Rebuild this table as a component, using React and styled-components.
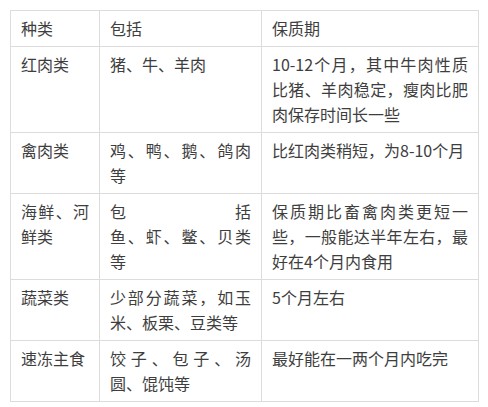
import React from "react";
import styled, { createGlobalStyle } from "styled-components";

const Global = createGlobalStyle`
  html, body { margin: 0; padding: 0; background: #fff; }
  body { font-family: "Noto Sans CJK SC", "Noto Sans", sans-serif; }
`;

const Page = styled.div`
  padding: 10px;
`;

const Table = styled.table`
  border-collapse: collapse;
  table-layout: fixed;
  width: 469px;
  font-size: 16px;
  line-height: 25px;
  color: #3e3e3e;
`;

const Col = styled.col`
  width: ${(p) => p.$w}px;
`;

const Cell = styled.td`
  border: 1px solid #dcdcdc;
  padding: 5px 10px;
  vertical-align: top;
  text-align: justify;
  word-break: normal;
  line-break: strict;
`;

const SpreadLine = styled.span`
  display: block;
  text-align: justify;
  text-align-last: justify;
`;

const widths = [89, 162, 217];

const rows = [
  ["种类", "包括", "保质期"],
  ["红肉类", "猪、牛、羊肉", "10-12个月，其中牛肉性质比猪、羊肉稳定，瘦肉比肥肉保存时间长一些"],
  ["禽肉类", "鸡、鸭、鹅、鸽肉等", "比红肉类稍短，为8-10个月"],
  [
    "海鲜、河鲜类",
    <>
      <SpreadLine>包括</SpreadLine>
      鱼、虾、鳖、贝类等
    </>,
    "保质期比畜禽肉类更短一些，一般能达半年左右，最好在4个月内食用",
  ],
  ["蔬菜类", "少部分蔬菜，如玉米、板栗、豆类等", "5个月左右"],
  ["速冻主食", "饺子、包子、汤圆、馄饨等", "最好能在一两个月内吃完"],
];

export default function App() {
  return (
    <Page>
      <Global />
      <Table>
        <colgroup>
          {widths.map((w, i) => (
            <Col key={i} $w={w} />
          ))}
        </colgroup>
        <tbody>
          {rows.map((r, i) => (
            <tr key={i}>
              {r.map((c, j) => (
                <Cell key={j}>{c}</Cell>
              ))}
            </tr>
          ))}
        </tbody>
      </Table>
    </Page>
  );
}
